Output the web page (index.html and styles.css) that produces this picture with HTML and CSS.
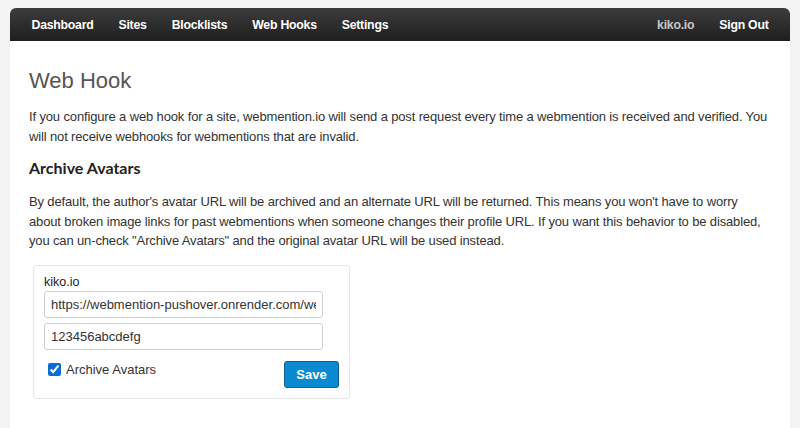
FILE: index.html
```html
<!DOCTYPE html>
<html lang="en">
<head>
<meta charset="utf-8">
<title>Web Hook</title>
<link rel="stylesheet" href="styles.css">
</head>
<body>
<div class="page">
  <nav class="navbar">
    <ul class="nav">
      <li><a href="#">Dashboard</a></li>
      <li><a href="#">Sites</a></li>
      <li><a href="#">Blocklists</a></li>
      <li><a href="#">Web Hooks</a></li>
      <li><a href="#">Settings</a></li>
    </ul>
    <ul class="nav nav-right">
      <li><a href="#" class="muted">kiko.io</a></li>
      <li><a href="#">Sign Out</a></li>
    </ul>
  </nav>
  <main class="content">
    <h1>Web Hook</h1>
    <p>If you configure a web hook for a site, webmention.io will send a post request every time a webmention is received and verified. You will not receive webhooks for webmentions that are invalid.</p>
    <h2>Archive Avatars</h2>
    <p>By default, the author's avatar URL will be archived and an alternate URL will be returned. This means you won't have to worry<br>about broken image links for past webmentions when someone changes their profile URL. If you want this behavior to be disabled,<br>you can un-check "Archive Avatars" and the original avatar URL will be used instead.</p>
    <form class="card">
      <label class="site">kiko.io</label>
      <input class="field" type="text" value="https://webmention-pushover.onrender.com/webmention">
      <input class="field" type="text" value="123456abcdefg">
      <div class="row">
        <label class="check"><input type="checkbox" checked> Archive Avatars</label>
        <button type="button" class="btn">Save</button>
      </div>
    </form>
  </main>
</div>
</body>
</html>
```
FILE: styles.css
```css
html, body {
  margin: 0;
  padding: 0;
}
body {
  background: #f3f3f3;
  font-family: "Liberation Sans", Arial, sans-serif;
  color: #333;
  font-size: 13px;
}
.page {
  margin: 8px 10px 0;
  width: 780px;
}
.navbar {
  height: 33px;
  display: flex;
  justify-content: space-between;
  align-items: center;
  background: linear-gradient(#3c3c3c, #1f1f1f);
  border-radius: 6px 6px 0 0;
}
.nav {
  list-style: none;
  margin: 0;
  padding: 0 9px;
  display: flex;
}
.nav-right {
  padding: 0 9px 0 0;
}
.nav a {
  display: block;
  padding: 1px 12.5px 0;
  color: #fff;
  font-weight: bold;
  font-size: 12.3px;
  text-decoration: none;
  line-height: 32px;
  letter-spacing: -0.25px;
}
.nav a.muted {
  color: #c8c8c8;
}
.content {
  background: #fff;
  padding: 27px 19px 28px;
  min-height: 340px;
}
h1 {
  margin: 0 0 14px;
  font-size: 22px;
  font-weight: normal;
  color: #555;
  line-height: 25px;
}
p {
  margin: 0 0 10px;
  line-height: 19.5px;
  font-size: 13px;
  letter-spacing: -0.14px;
}
h2 {
  font-family: Lato, "Liberation Sans", sans-serif;
  font-weight: bold;
  font-size: 16px;
  margin: 12px 0 14px;
  color: #222;
  line-height: 20px;
}
.card {
  margin: 14px 0 0 4px;
  width: 295px;
  border: 1px solid #e6e6e6;
  border-radius: 3px;
  padding: 8px 10px 10px;
  display: flex;
  flex-direction: column;
  gap: 5px;
}
.site {
  font-size: 12.5px;
  line-height: 16px;
  margin-bottom: -4px;
  color: #222;
}
.field {
  width: 279px;
  box-sizing: border-box;
  height: 27px;
  border: 1px solid #d0d0d0;
  border-radius: 3px;
  padding: 0 6px;
  font-family: "Liberation Sans", Arial, sans-serif;
  font-size: 13px;
  color: #333;
  background: #fff;
}
.row {
  display: flex;
  justify-content: space-between;
  align-items: flex-start;
  margin-top: 6px;
}
.check {
  display: flex;
  align-items: center;
  gap: 5px;
  margin-left: 4px;
  margin-top: 1px;
  font-size: 13px;
  color: #333;
}
.check input {
  margin: 0;
  width: 13px;
  height: 13px;
  accent-color: #0a6cd8;
}
.btn {
  width: 55px;
  height: 27px;
  margin-right: 0;
  background: #0a8bd1;
  border: 1px solid #155b8c;
  border-radius: 3px;
  color: #fff;
  font-family: "Liberation Sans", Arial, sans-serif;
  font-weight: bold;
  font-size: 13px;
}
```
